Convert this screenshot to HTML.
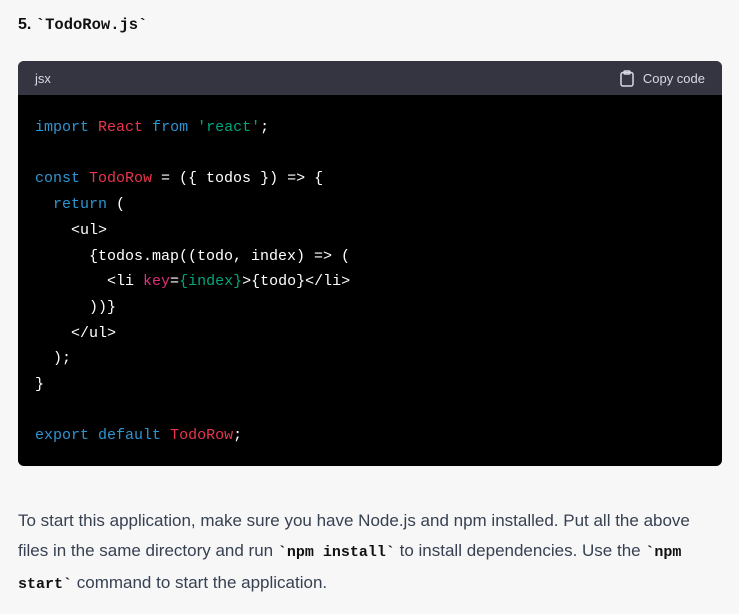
<!DOCTYPE html>
<html><head><style>
body{margin:0;background:#f7f7f8;width:739px;height:614px;overflow:hidden;font-family:"Liberation Sans",sans-serif;color:#374151}
.h{position:absolute;left:18px;top:16px;font-size:16px;font-weight:bold;color:#111}
.h code{font-family:"Liberation Mono",monospace;font-size:15.5px}
.box{position:absolute;left:18px;top:61px;width:704px;height:405px;background:#000;border-radius:6px;overflow:hidden}
.hd{height:34px;background:#343541;color:#d9d9e3;font-size:13px;display:flex;align-items:center;justify-content:space-between;padding:0 17px}
.cp{display:flex;align-items:center;gap:9px}
pre{margin:0;padding:20px 17px;font-family:"Liberation Mono",monospace;font-size:15px;line-height:25.7px;color:#fff}
.k{color:#2e95d3}.r{color:#df3079}.t{color:#e9354d}.s{color:#00a67d}
p{position:absolute;left:18px;top:506px;width:700px;margin:0;font-size:17px;line-height:30px}
p code{font-family:"Liberation Mono",monospace;font-weight:bold;font-size:15px;color:#111}
</style></head><body>
<div class="h">5. <code>`TodoRow.js`</code></div>
<div class="box">
<div class="hd"><span>jsx</span><span class="cp"><svg width="14" height="17" viewBox="0 0 14 17" fill="none" stroke="#d9d9e3" stroke-width="1.5"><rect x="1" y="2.5" width="12" height="13.5" rx="2"/><rect x="4" y="1" width="6" height="3" rx="1"/></svg>Copy code</span></div>
<pre><span class="k">import</span> <span class="t">React</span> <span class="k">from</span> <span class="s">'react'</span>;

<span class="k">const</span> <span class="t">TodoRow</span> = ({ todos }) =&gt; {
  <span class="k">return</span> (
    &lt;ul&gt;
      {todos.map((todo, index) =&gt; (
        &lt;li <span class="r">key</span>=<span class="s">{index}</span>&gt;{todo}&lt;/li&gt;
      ))}
    &lt;/ul&gt;
  );
}

<span class="k">export</span> <span class="k">default</span> <span class="t">TodoRow</span>;</pre>
</div>
<p>To start this application, make sure you have Node.js and npm installed. Put all the above files in the same directory and run <code>`npm install`</code> to install dependencies. Use the <code>`npm start`</code> command to start the application.</p>
</body></html>
